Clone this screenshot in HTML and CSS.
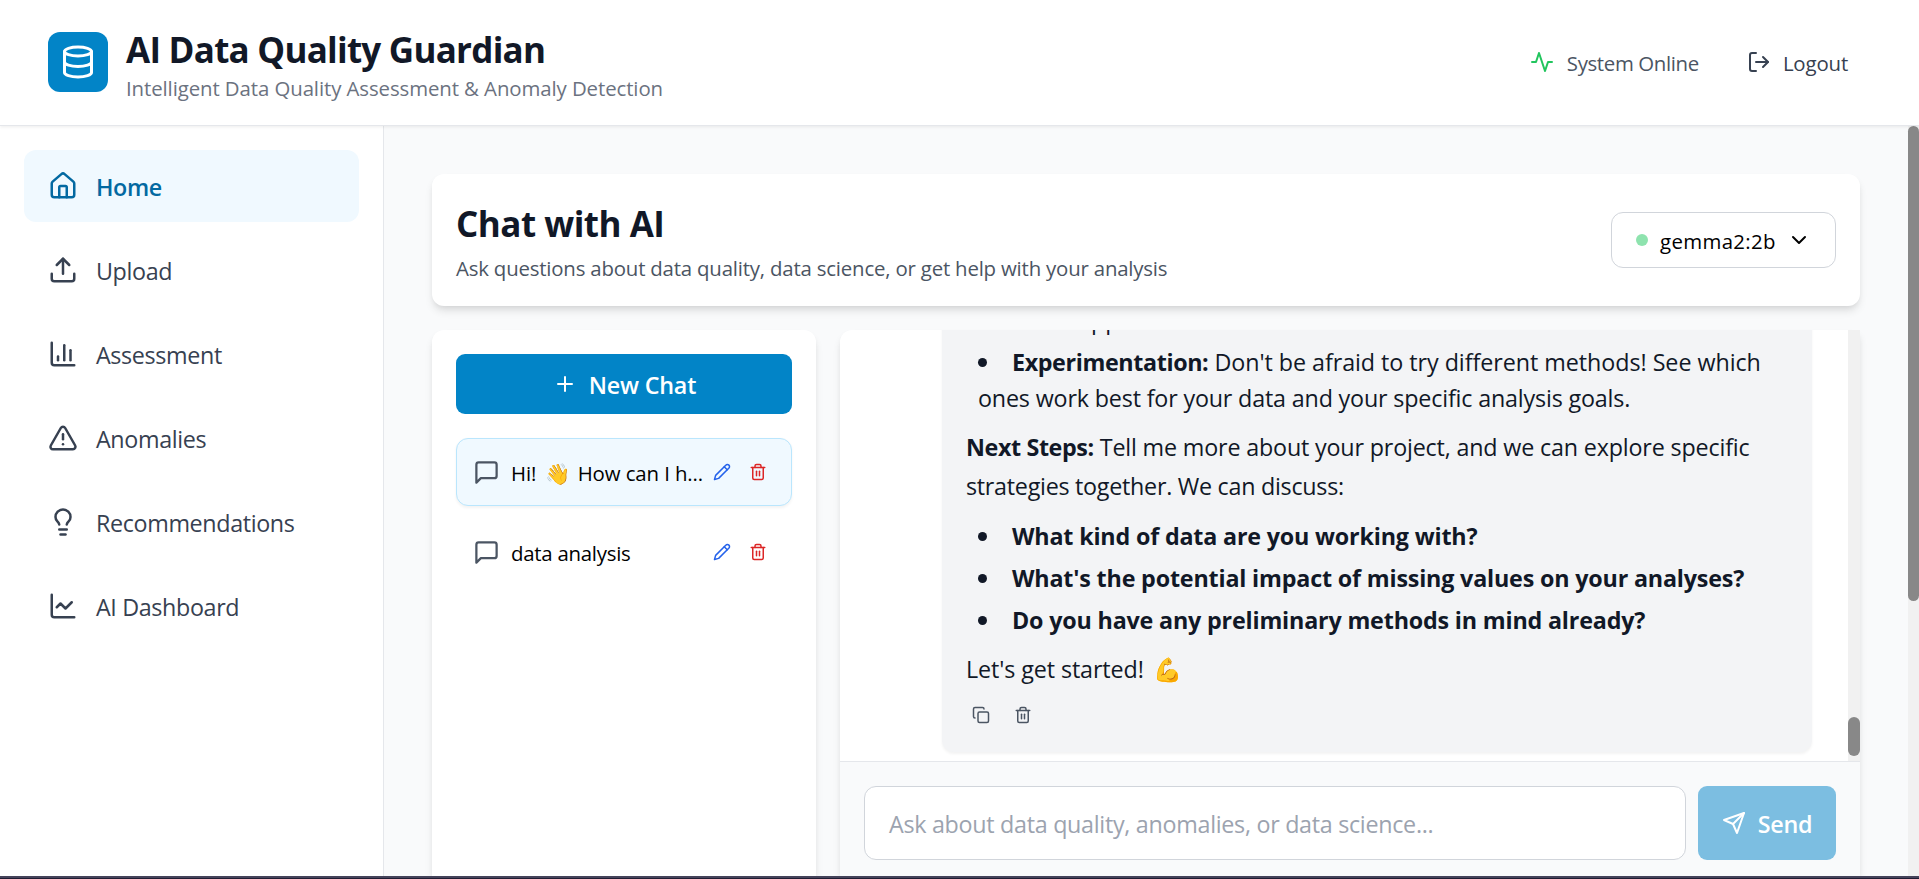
FILE: index.html
```html
<!DOCTYPE html>
<html lang="en">
<head>
<meta charset="utf-8">
<title>AI Data Quality Guardian</title>
<link rel="stylesheet" href="styles.css">
</head>
<body>
<svg class="defs" aria-hidden="true">
  <symbol id="trash" viewBox="0 0 24 24"><path d="M3 6h18"/><path d="M19 6v14c0 1-1 2-2 2H7c-1 0-2-1-2-2V6"/><path d="M8 6V4c0-1 1-2 2-2h4c1 0 2 1 2 2v2"/><path d="M10 11v6"/><path d="M14 11v6"/></symbol>
  <symbol id="pen" viewBox="0 0 24 24"><path d="M17 3a2.85 2.83 0 1 1 4 4L7.5 20.5 2 22l1.5-5.5Z"/><path d="m15 5 4 4"/></symbol>
  <symbol id="message" viewBox="0 0 24 24"><path d="M21 15a2 2 0 0 1-2 2H7l-4 4V5a2 2 0 0 1 2-2h14a2 2 0 0 1 2 2z"/></symbol>
</svg>
<div class="app">
  <header class="header">
    <div class="logo"><svg class="icon i36" viewBox="0 0 24 24"><ellipse cx="12" cy="5" rx="9" ry="3"/><path d="M3 5v14a9 3 0 0 0 18 0V5"/><path d="M3 12a9 3 0 0 0 18 0"/></svg></div>
    <div class="brand">
      <h1 class="brand-title">AI Data Quality Guardian</h1>
      <p class="brand-sub">Intelligent Data Quality Assessment &amp; Anomaly Detection</p>
    </div>
    <div class="status"><svg class="icon i24 green" viewBox="0 0 24 24"><path d="M22 12h-4l-3 9L9 3l-3 9H2"/></svg><span>System Online</span></div>
    <button class="logout"><svg class="icon i24" viewBox="0 0 24 24"><path d="M9 21H5a2 2 0 0 1-2-2V5a2 2 0 0 1 2-2h4"/><path d="m16 17 5-5-5-5"/><path d="M21 12H9"/></svg><span>Logout</span></button>
  </header>
  <div class="body">
    <nav class="sidebar">
      <a class="nav active"><svg class="icon i30" viewBox="0 0 24 24"><path d="M15 21v-8a1 1 0 0 0-1-1h-4a1 1 0 0 0-1 1v8"/><path d="M3 10a2 2 0 0 1 .709-1.528l7-5.999a2 2 0 0 1 2.582 0l7 5.999A2 2 0 0 1 21 10v9a2 2 0 0 1-2 2H5a2 2 0 0 1-2-2z"/></svg><span>Home</span></a>
      <a class="nav"><svg class="icon i30" viewBox="0 0 24 24"><path d="M21 15v4a2 2 0 0 1-2 2H5a2 2 0 0 1-2-2v-4"/><path d="m17 8-5-5-5 5"/><path d="M12 3v12"/></svg><span>Upload</span></a>
      <a class="nav"><svg class="icon i30" viewBox="0 0 24 24"><path d="M3 3v16a2 2 0 0 0 2 2h16"/><path d="M18 17V9"/><path d="M13 17V5"/><path d="M8 17v-3"/></svg><span>Assessment</span></a>
      <a class="nav"><svg class="icon i30" viewBox="0 0 24 24"><path d="m21.73 18-8-14a2 2 0 0 0-3.48 0l-8 14A2 2 0 0 0 4 21h16a2 2 0 0 0 1.73-3"/><path d="M12 9v4"/><path d="M12 17h.01"/></svg><span>Anomalies</span></a>
      <a class="nav"><svg class="icon i30" viewBox="0 0 24 24"><path d="M15 14c.2-1 .7-1.7 1.5-2.5 1-.9 1.5-2.2 1.5-3.5A6 6 0 0 0 6 8c0 1 .2 2.2 1.5 3.5.7.7 1.3 1.5 1.5 2.5"/><path d="M9 18h6"/><path d="M10 22h4"/></svg><span>Recommendations</span></a>
      <a class="nav"><svg class="icon i30" viewBox="0 0 24 24"><path d="M3 3v16a2 2 0 0 0 2 2h16"/><path d="m19 9-5 5-4-4-3 3"/></svg><span>AI Dashboard</span></a>
    </nav>
    <main class="main">
      <section class="card chat-head">
        <div>
          <h2 class="chat-title">Chat with AI</h2>
          <p class="chat-sub">Ask questions about data quality, data science, or get help with your analysis</p>
        </div>
        <button class="model"><i class="dot"></i><span>gemma2:2b</span><svg class="icon i24" viewBox="0 0 24 24"><path d="m6 9 6 6 6-6"/></svg></button>
      </section>
      <div class="columns">
        <aside class="card threads">
          <button class="new-chat"><svg class="icon i24" viewBox="0 0 24 24"><path d="M5 12h14"/><path d="M12 5v14"/></svg><span>New Chat</span></button>
          <div class="thread selected"><svg class="icon i27"><use href="#message"/></svg><span class="thread-name">Hi! <span class="emoji wave">👋</span> How can I h...</span><svg class="icon i18 blue"><use href="#pen"/></svg><svg class="icon i18 red"><use href="#trash"/></svg></div>
          <div class="thread"><svg class="icon i27"><use href="#message"/></svg><span class="thread-name narrow">data analysis</span><svg class="icon i18 blue"><use href="#pen"/></svg><svg class="icon i18 red"><use href="#trash"/></svg></div>
        </aside>
        <section class="card chat">
          <div class="messages">
            <div class="bubble">
              <ul class="list">
                <li>different approach.</li>
                <li class="bulleted"><b class="b1">Experimentation:</b><span class="l1"> Don't be afraid to try different methods! See which</span><br><span class="l2">ones work best for your data and your specific analysis goals.</span></li>
              </ul>
              <p class="para"><b class="b1">Next Steps:</b><span class="l2"> Tell me more about your project, and we can explore specific</span><br><span class="l3">strategies together. We can discuss:</span></p>
              <ul class="list">
                <li class="bulleted"><b>What kind of data are you working with?</b></li>
                <li class="bulleted"><b>What's the potential impact of missing values on your analyses?</b></li>
                <li class="bulleted"><b>Do you have any preliminary methods in mind already?</b></li>
              </ul>
              <p class="para"><span class="l4">Let's get started! </span><span class="emoji flex">💪</span></p>
              <div class="actions"><svg class="icon i18" viewBox="0 0 24 24"><rect x="8" y="8" width="14" height="14" rx="2"/><path d="M4 16c-1.100 0-2-.9-2-2V4c0-1.100.9-2 2-2h10c1.100 0 2 .9 2 2"/></svg><svg class="icon i18"><use href="#trash"/></svg></div>
            </div>
            <div class="inner-track"><div class="inner-thumb"></div></div>
          </div>
          <div class="composer">
            <div class="input">Ask about data quality, anomalies, or data science...</div>
            <button class="send"><svg class="icon i24" viewBox="0 0 24 24"><path d="m22 2-7 20-4-9-9-4Z"/><path d="M22 2 11 13"/></svg><span>Send</span></button>
          </div>
        </section>
      </div>
    </main>
    <div class="page-track"><div class="page-thumb"></div></div>
  </div>
  <div class="bottom-edge"></div>
</div>
</body>
</html>
```
FILE: styles.css
```css
*{box-sizing:border-box}
body,h1,h2,p,ul{margin:0;padding:0}
body{font-family:"Open Sans","Noto Sans",sans-serif;font-size:23.3px;color:#111827;overflow:hidden}
button{font:inherit;color:inherit;background:none;border:0;margin:0;padding:0}
ul{list-style:none}
span,b{white-space:nowrap}
.defs{display:none}
.app{height:879px;display:flex;flex-direction:column;background:#f9fafb}
.icon{flex:none;display:block;fill:none;stroke:currentColor;stroke-width:2;stroke-linecap:round;stroke-linejoin:round}
.i18{width:18px;height:18px}
.i24{width:24px;height:24px}
.i27{width:27px;height:27px}
.i30{width:30px;height:30px}
.i36{width:36px;height:36px}
.green{color:#22c55e}
.blue{color:#2563eb}
.red{color:#dc2626}

.header{position:relative;flex:none;height:126px;display:flex;align-items:center;padding:0 71px 2px 48px;background:#fff;border-bottom:1px solid #e5e7eb;box-shadow:0 1.5px 3px rgba(0,0,0,.06)}
.logo{width:60px;height:60px;border-radius:12px;background:#0284c7;color:#fff;display:flex;align-items:center;justify-content:center}
.brand{margin-left:18px;margin-right:auto;padding-top:4px}
.brand-title{font-size:35px;line-height:48px;letter-spacing:-.75px;font-weight:700}
.brand-sub{font-size:20.4px;line-height:28px;letter-spacing:-.09px;color:#6b7280}
.status,.logout{display:flex;align-items:center;font-size:20.4px;line-height:30px}
.status{color:#4b5563;letter-spacing:-.35px;margin-right:48px}
.status span{margin-left:13px;padding-top:2px}
.logout span{margin-left:12px;padding-top:2px}
.logout{color:#374151;letter-spacing:-.15px}

.body{flex:1;min-height:0;display:flex}
.sidebar{flex:none;width:384px;background:#fff;border-right:1px solid #e5e7eb;padding:24px;display:flex;flex-direction:column;gap:12px}
.nav{height:72px;flex:none;display:flex;align-items:center;gap:18px;padding:0 24px;border-radius:12px;color:#374151;letter-spacing:-.36px}
.nav span{padding-top:2px}
.nav.active{background:#f0f9ff;color:#0369a1;font-weight:600;letter-spacing:-.4px}

.main{flex:1;min-width:0;padding:48px 48px 0;display:flex;flex-direction:column;gap:24px}
.card{background:#fff;border-radius:12px;box-shadow:0 6px 9px -1.5px rgba(0,0,0,.1),0 3px 6px -3px rgba(0,0,0,.1)}
.chat-head{flex:none;height:132px;display:flex;align-items:center;justify-content:space-between;padding:0 24px}
.chat-title{font-size:35px;line-height:54px;letter-spacing:-.5px}
.chat-sub{font-size:20.4px;line-height:32px;letter-spacing:-.19px;color:#4b5563;padding-top:1px}
.model{width:225px;height:56px;display:flex;align-items:center;border:1px solid #d1d5db;border-radius:12px;padding:0 24px;font-size:20.4px;font-weight:500;color:#000;letter-spacing:.35px}
.dot{width:12px;height:12px;border-radius:50%;background:#8ee3ae}
.model span{margin-left:12px;padding-top:2px;margin-right:auto}

.columns{flex:1;min-height:0;display:flex;gap:24px}
.threads{flex:none;width:384px;padding:24px;border-radius:12px 12px 0 0}
.new-chat{width:100%;height:60px;border-radius:9px;background:#0284c7;color:#fff;font-weight:600;letter-spacing:-.2px;display:flex;align-items:center;justify-content:center;gap:12px;margin-bottom:24px;padding-left:1px}
.new-chat span{padding-top:2px}
.thread{height:68px;display:flex;align-items:center;border:1px solid transparent;border-radius:12px;padding:0 24px 0 17px;margin-bottom:12px;color:#000;font-size:20.4px}
.thread.selected{background:#f0f9ff;border-color:#bae6fd;box-shadow:0 1.5px 3px rgba(0,0,0,.05)}
.thread .i27{color:#4b5563;margin-left:-1px}
.thread-name{flex:1;margin-left:11px;padding-top:1px;letter-spacing:-.1px}
.narrow{letter-spacing:-.25px}
.thread .i18+.i18{margin-left:18px}

.chat{flex:1;min-width:0;display:flex;flex-direction:column;overflow:hidden;border-radius:12px 0 0 0}
.messages{flex:none;height:431px;display:flex;align-items:flex-end;padding-left:102px;overflow:hidden}
.bubble{width:870px;margin-bottom:9px;padding:24px 24px 25px;background:#f3f4f6;border-radius:12px;box-shadow:0 1.5px 3px rgba(0,0,0,.05)}
.list{padding-left:12px;line-height:36px;display:flex;flex-direction:column;gap:6px}
.bulleted::before{content:"";display:inline-block;width:9px;height:9px;border-radius:50%;background:#111827;margin-right:25px;vertical-align:4px}
.list b{letter-spacing:-.18px}
.list .b1,.para .b1{letter-spacing:-.38px}
.l1{letter-spacing:-.05px}
.l2{letter-spacing:-.17px}
.l3{letter-spacing:-.27px}
.l4{letter-spacing:-.1px}
.para{line-height:39px;margin:12px 0}
.emoji{letter-spacing:0}
.wave{margin:0 2px 0 4px}
.flex{margin-left:3px}
.actions{display:flex;gap:24px;color:#4b5563;padding:5px 6px 3px;margin-top:11px}
.inner-track{align-self:stretch;width:12px;margin-left:auto;padding-top:387px;background:#f1f1f1}
.inner-thumb{height:39px;border-radius:6px;background:#888}
.composer{flex:1;display:flex;align-items:flex-start;gap:12px;padding:24px;background:#f9fafb;border-top:1px solid #e5e7eb}
.input{flex:1;height:74px;padding:0 24px;background:#fff;border:1px solid #d1d5db;border-radius:12px;line-height:74px;color:#9ca3af;letter-spacing:-.29px;white-space:nowrap}
.send{width:138px;height:74px;border-radius:9px;background:#7cbee1;color:#fff;font-weight:600;letter-spacing:-.2px;display:flex;align-items:center;justify-content:center;gap:12px}
.send span{padding-top:2px}

.page-track{flex:none;width:11px;background:#f1f1f1}
.page-thumb{height:475px;border-radius:6px;background:#888}
.bottom-edge{flex:none;height:3px;background:#1f1c33;border-top:2px solid #45435a}
```
